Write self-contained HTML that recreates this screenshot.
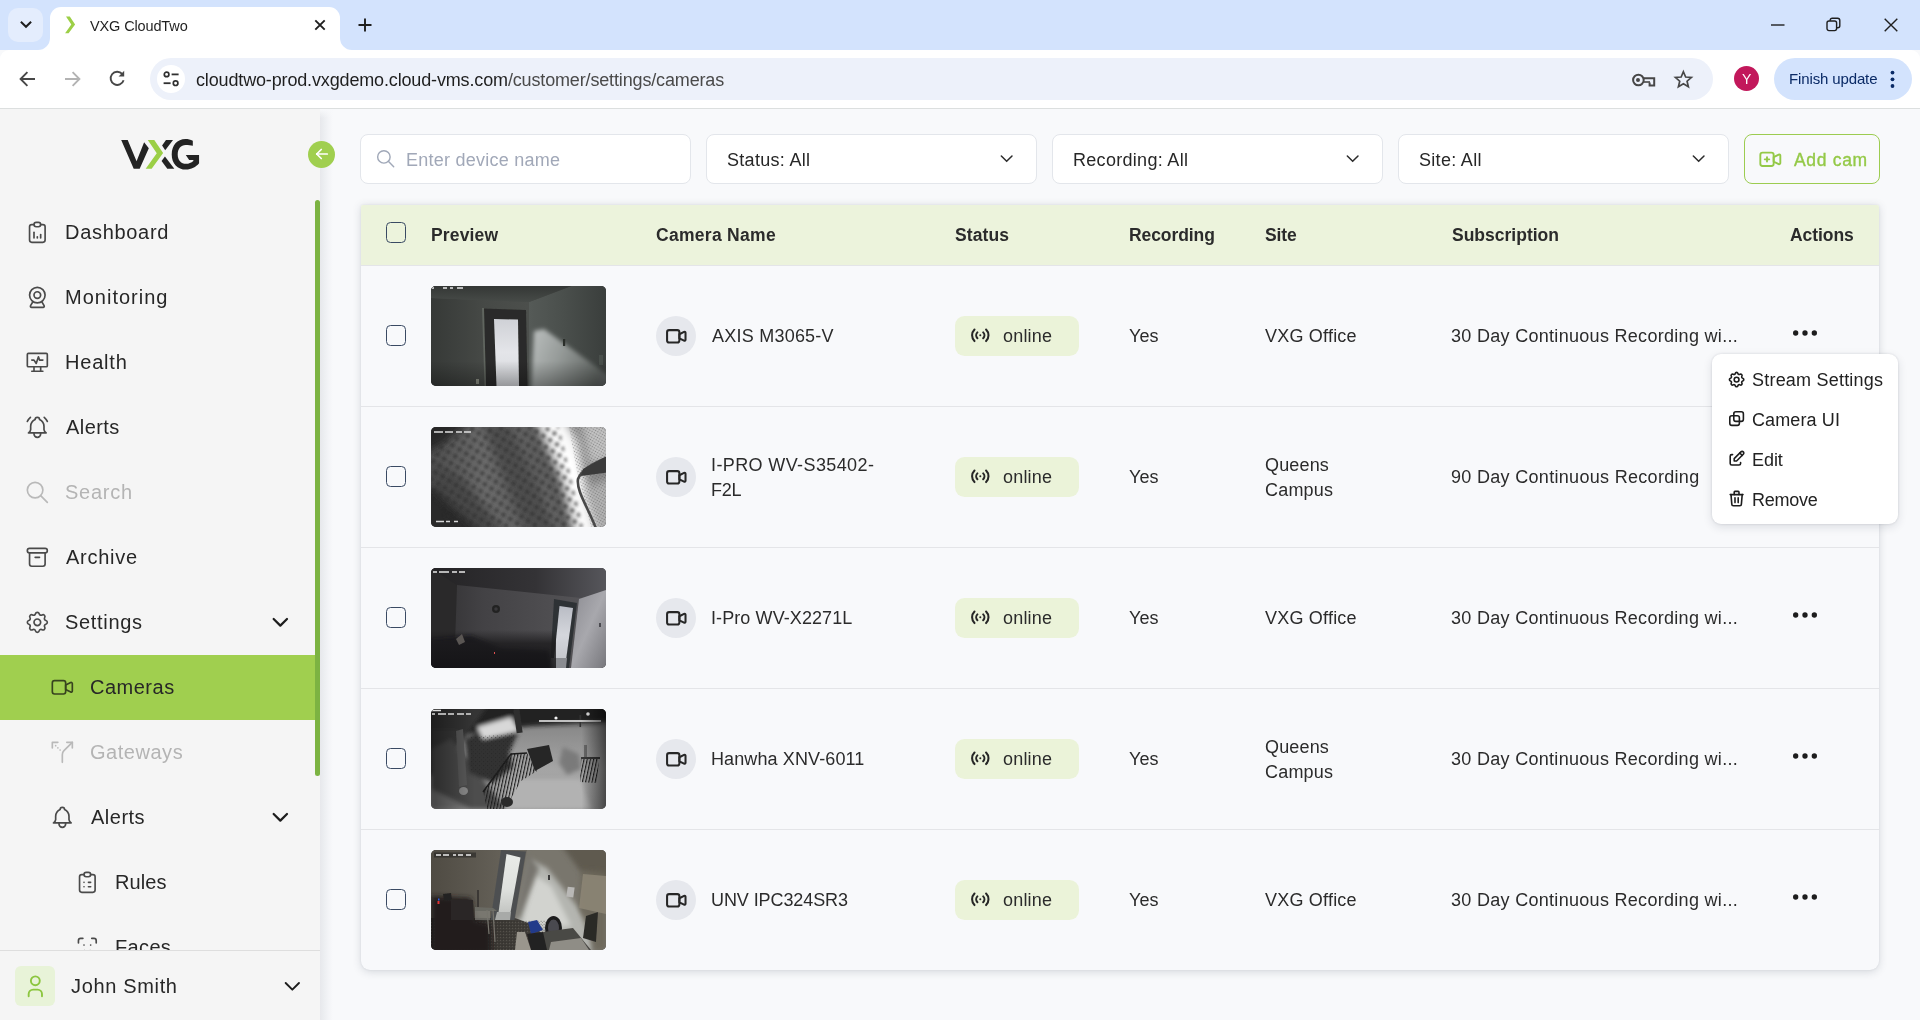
<!DOCTYPE html>
<html lang="en">
<head>
<meta charset="utf-8">
<title>VXG CloudTwo</title>
<style>
*{box-sizing:border-box;margin:0;padding:0}
html,body{width:1920px;height:1020px;overflow:hidden;background:#f8f9fb;font-family:"Liberation Sans",sans-serif;color:#272727}
body{position:relative}
.abs{position:absolute}
svg{display:block;overflow:visible}
.t{position:absolute;white-space:nowrap;line-height:1;will-change:transform}
/* ---------- browser chrome ---------- */
#tabstrip{position:absolute;left:0;top:0;width:1920px;height:50px;background:#d3e3fd}
#toolbar{position:absolute;left:0;top:50px;width:1920px;height:58px;background:#fff;border-radius:9px 9px 0 0}
#tbline{position:absolute;left:0;top:108px;width:1920px;height:1.2px;background:#dcdfdf}
#tabsearch{position:absolute;left:8px;top:8px;width:35px;height:34px;border-radius:10px;background:#e4edfd}
#tab{position:absolute;left:50px;top:7px;width:290px;height:43px;background:#fff;border-radius:11px 11px 0 0}
.flare{position:absolute;top:38px;width:12px;height:12px}
#urlpill{position:absolute;left:150px;top:58px;width:1563px;height:42px;border-radius:21px;background:#edf1fa}
#siteinfo{position:absolute;left:157px;top:65px;width:28px;height:28px;border-radius:14px;background:#fff}
#avatar{position:absolute;left:1734px;top:66px;width:25px;height:25px;border-radius:50%;background:#c2185b}
#finish{position:absolute;left:1774px;top:58px;width:138px;height:42px;border-radius:21px;background:#d3e3fd}
/* ---------- sidebar ---------- */
#sidebar{position:absolute;left:0;top:110px;width:320px;height:910px;background:#f5f5f5;box-shadow:0 -1px 0 #f5f5f5}
#sideshadow{position:absolute;left:320px;top:110px;width:13px;height:910px;background:linear-gradient(90deg,#e7e8ec 0,#eceef1 30%,#f3f4f7 65%,#f8f9fb 100%)}
#navclip{position:absolute;left:0;top:90px;width:320px;height:750px;overflow:hidden}
.nav{position:absolute;left:0;width:316px;height:65px}
.nav .t{font-size:20px;top:22px;letter-spacing:.45px;color:#272727}
.nav.dim .t{color:#b4b4b4}
.nav svg{position:absolute}
#active{position:absolute;left:0;top:545px;width:316px;height:65px;background:#a0cf4f}
#thumbbar{position:absolute;left:315px;top:200px;width:5px;height:576px;border-radius:3px;background:#7cb342}
#userbar{position:absolute;left:0;top:950px;width:320px;height:70px;background:#f5f5f5;border-top:1px solid #dedede}
#uavatar{position:absolute;left:15px;top:15px;width:40px;height:40px;border-radius:6px;background:#e8f3d8}
/* ---------- main ---------- */
.field{position:absolute;top:134px;height:49.5px;width:330.5px;background:#fff;border:1.2px solid #e3e6eb;border-radius:8px}
.field .t{font-size:18px;top:15.5px;left:20px;letter-spacing:.3px;color:#272727}
#addcam{position:absolute;left:1744px;top:134px;width:136px;height:50px;border:1.4px solid #9ccc50;border-radius:8px;background:#f8f9fb}
#card{position:absolute;left:361px;top:205px;width:1518px;height:764.7px;background:#f8f9fb;border-radius:2px 2px 9px 9px;box-shadow:0 1.5px 9px rgba(50,60,75,.17),0 0 2px rgba(50,60,75,.10)}
#thead{position:absolute;left:0;top:0;width:1518px;height:60.3px;background:#ecf3dc;border-radius:2px 2px 0 0}
#thead .t{font-size:17.5px;font-weight:bold;top:21.5px;color:#2b2b2b}
.row{position:absolute;left:0;width:1518px;height:141px;border-top:1.2px solid #e4e5e8}
.row .t{font-size:18px;color:#2b2b2b}
.cb{position:absolute;left:25px;width:20px;height:20.6px;border:1.4px solid #3a4a63;border-radius:4.5px}
.thumb{position:absolute;left:70px;top:20px;width:175px;height:100px;border-radius:5px;overflow:hidden;background:#333}
.camic{position:absolute;left:295px;top:50px;width:40px;height:40px;border-radius:50%;background:#e6e8ed}
.badge{position:absolute;left:594px;top:50.3px;width:124px;height:39.3px;border-radius:9.5px;background:#ebf3d9}
#menu{position:absolute;left:1712px;top:354px;width:186px;height:170.3px;background:#fff;border-radius:9px;box-shadow:0 3px 10px rgba(30,40,60,.13),0 0 3px rgba(30,40,60,.12)}
#menu .t{font-size:18px;color:#222}
</style>
</head>
<body>
<!-- ================= BROWSER CHROME ================= -->
<div id="tabstrip"></div>
<div id="toolbar"></div>
<div id="tbline"></div>
<div id="tabsearch"></div>
<div id="tab"></div>
<div id="urlpill"></div>
<div id="siteinfo"></div>
<div id="avatar"></div>
<div id="finish"></div>

<!-- tab flares -->
<svg class="abs" style="left:38px;top:38px" width="12" height="12" viewBox="0 0 12 12"><path d="M12 0 V12 H0 A12 12 0 0 0 12 0Z" fill="#fff"/></svg>
<svg class="abs" style="left:340px;top:38px" width="12" height="12" viewBox="0 0 12 12"><path d="M0 0 V12 H12 A12 12 0 0 1 0 0Z" fill="#fff"/></svg>
<!-- tab search chevron -->
<svg class="abs" style="left:19.6px;top:21.4px" width="12" height="8" viewBox="0 0 12 8"><path d="M1.6 1.4 L6 5.8 L10.4 1.4" fill="none" stroke="#1f1f1f" stroke-width="2" stroke-linecap="square" stroke-linejoin="miter"/></svg>
<!-- favicon -->
<svg class="abs" style="left:64px;top:16px" width="12" height="18" viewBox="0 0 12 18"><path d="M2 0.6 H5.8 L11.1 8.4 L4.6 17.2 H1.1 L7.3 8.4Z" fill="#9ccf46"/></svg>
<div class="t" style="left:90px;top:18.7px;font-size:14.5px;letter-spacing:-.13px;color:#1f1f1f">VXG CloudTwo</div>
<!-- tab close -->
<svg class="abs" style="left:314px;top:19.4px" width="12" height="12" viewBox="0 0 12 12"><path d="M1.3 1.3 L10.7 10.7 M10.7 1.3 L1.3 10.7" stroke="#1f1f1f" stroke-width="1.9" fill="none"/></svg>
<!-- new tab plus -->
<svg class="abs" style="left:358px;top:18px" width="14" height="14" viewBox="0 0 14 14"><path d="M7 0.5 V13.5 M0.5 7 H13.5" stroke="#1f1f1f" stroke-width="1.9" fill="none"/></svg>
<!-- window controls -->
<svg class="abs" style="left:1771px;top:24px" width="14" height="2" viewBox="0 0 14 2"><path d="M0 1 H13.5" stroke="#1f1f1f" stroke-width="1.4"/></svg>
<svg class="abs" style="left:1826px;top:17px" width="15" height="15" viewBox="0 0 15 15"><rect x="1" y="4" width="9.6" height="9.6" rx="2" fill="none" stroke="#1f1f1f" stroke-width="1.4"/><path d="M4.2 3.8 V3.2 A2 2 0 0 1 6.2 1.2 H11.6 A2.2 2.2 0 0 1 13.8 3.4 V8.8 A2 2 0 0 1 11.8 10.8 H11" fill="none" stroke="#1f1f1f" stroke-width="1.4"/></svg>
<svg class="abs" style="left:1884px;top:18px" width="14" height="14" viewBox="0 0 14 14"><path d="M0.7 0.7 L13.3 13.3 M13.3 0.7 L0.7 13.3" stroke="#1f1f1f" stroke-width="1.4" fill="none"/></svg>
<!-- back / forward / reload -->
<svg class="abs" style="left:19px;top:71px" width="17" height="16" viewBox="0 0 17 16"><path d="M16 8 H2.2 M8.4 1.2 L1.6 8 L8.4 14.8" fill="none" stroke="#474747" stroke-width="1.9"/></svg>
<svg class="abs" style="left:64px;top:71px" width="17" height="16" viewBox="0 0 17 16"><path d="M1 8 H14.8 M8.6 1.2 L15.4 8 L8.6 14.8" fill="none" stroke="#b3b3b3" stroke-width="1.9"/></svg>
<svg class="abs" style="left:109px;top:70px" width="17" height="17" viewBox="0 0 17 17"><path d="M14.6 10.2 A6.6 6.6 0 1 1 13.2 3.9" fill="none" stroke="#474747" stroke-width="1.9"/><path d="M15.2 0.8 V6.4 H9.6 Z" fill="#474747"/></svg>
<!-- site info (tune) icon -->
<svg class="abs" style="left:163px;top:71px" width="17" height="16" viewBox="0 0 17 16"><circle cx="3.6" cy="3.4" r="2.3" fill="none" stroke="#303030" stroke-width="1.7"/><path d="M8.6 3.4 H15.6" stroke="#303030" stroke-width="1.8"/><circle cx="12.6" cy="12.2" r="2.3" fill="none" stroke="#303030" stroke-width="1.7"/><path d="M0.6 12.2 H7.6" stroke="#303030" stroke-width="1.8"/></svg>
<div class="t" style="left:196px;top:71px;font-size:18px;letter-spacing:-.15px;color:#4a4a4a"><span style="color:#1f1f1f">cloudtwo-prod.vxgdemo.cloud-vms.com</span>/customer/settings/cameras</div>
<!-- key icon -->
<svg class="abs" style="left:1632px;top:72.7px" width="24" height="15" viewBox="0 0 24 15"><circle cx="6.4" cy="7" r="5.3" fill="none" stroke="#474747" stroke-width="2"/><circle cx="6" cy="7" r="2" fill="#474747"/><path d="M11.4 5.2 H22.2 V12.4 H17.6 V9.4" fill="none" stroke="#474747" stroke-width="2"/><path d="M11.4 9 H18" stroke="#474747" stroke-width="1.6"/></svg>
<!-- star icon -->
<svg class="abs" style="left:1674.4px;top:70px" width="18.8" height="17.9" viewBox="0 0 20 19"><path d="M10 1.8 L12.4 7.4 L18.5 7.9 L13.9 11.9 L15.3 17.8 L10 14.7 L4.7 17.8 L6.1 11.9 L1.5 7.9 L7.6 7.4 Z" fill="none" stroke="#474747" stroke-width="1.8" stroke-linejoin="miter"/></svg>
<div class="t" style="left:1741.8px;top:71.6px;font-size:14px;color:#fff">Y</div>
<div class="t" style="left:1789px;top:70.8px;font-size:15px;letter-spacing:-.13px;color:#0a2a66">Finish update</div>
<svg class="abs" style="left:1890px;top:69.6px" width="5" height="19" viewBox="0 0 5 19"><circle cx="2.5" cy="2.6" r="1.9" fill="#0a2a66"/><circle cx="2.5" cy="9.3" r="1.9" fill="#0a2a66"/><circle cx="2.5" cy="16" r="1.9" fill="#0a2a66"/></svg>


<!-- ================= SIDEBAR ================= -->
<div id="sidebar">
<svg class="abs" style="left:110px;top:20px" width="100" height="50" viewBox="0 0 1920 960">
<path d="M215 190 H340 L510 600 L655 235 L745 350 L570 745 H455 Z" fill="#232323"/>
<path d="M725 190 H850 L1020 442 L800 745 H685 L898 446 Z" fill="#9bcf46"/>
<path d="M1075 190 H1210 L1060 390 L1000 296 Z" fill="#232323"/>
<path d="M1055 510 L1235 745 H1100 L990 596 Z" fill="#232323"/>
<path d="M1590 205 C1545 185 1500 175 1450 175 C1290 175 1185 300 1185 468 C1185 640 1295 760 1460 760 C1560 760 1650 715 1710 640 V480 H1455 L1520 576 H1600 V596 C1560 632 1510 650 1462 650 C1365 650 1300 575 1300 468 C1300 362 1362 288 1452 288 C1505 288 1550 296 1590 300 Z" fill="#232323"/>
</svg>
<div id="navclip">
<div class="nav" style="top:-0.5px"><svg class="abs" style="left:24.4px;top:19.17px" width="26.67" height="26.67" viewBox="0 0 24 24" fill="none" stroke="#4a4a4a" stroke-width="1.5" stroke-linecap="round" stroke-linejoin="round"><path d="M9 5h-2a2 2 0 0 0 -2 2v12a2 2 0 0 0 2 2h10a2 2 0 0 0 2 -2v-12a2 2 0 0 0 -2 -2h-2"/><path d="M9 5a2 2 0 0 1 2 -2h2a2 2 0 0 1 2 2a2 2 0 0 1 -2 2h-2a2 2 0 0 1 -2 -2z"/><path d="M9 17v-5"/><path d="M12 17v-1"/><path d="M15 17v-3"/></svg><div class="t" style="left:64.8px;letter-spacing:0.69px">Dashboard</div></div>
<div class="nav" style="top:64.5px"><svg class="abs" style="left:24.4px;top:19.17px" width="26.67" height="26.67" viewBox="0 0 24 24" fill="none" stroke="#4a4a4a" stroke-width="1.5" stroke-linecap="round" stroke-linejoin="round"><circle cx="12" cy="10" r="7"/><circle cx="12" cy="10" r="3"/><path d="M8 16l-2.091 3.486a1 1 0 0 0 .857 1.514h10.468a1 1 0 0 0 .857 -1.514l-2.091 -3.486"/></svg><div class="t" style="left:64.8px;letter-spacing:1.01px">Monitoring</div></div>
<div class="nav" style="top:129.5px"><svg class="abs" style="left:24.4px;top:19.17px" width="26.67" height="26.67" viewBox="0 0 24 24" fill="none" stroke="#4a4a4a" stroke-width="1.5" stroke-linecap="round" stroke-linejoin="round"><path d="M3 5a1 1 0 0 1 1 -1h16a1 1 0 0 1 1 1v10a1 1 0 0 1 -1 1h-16a1 1 0 0 1 -1 -1z"/><path d="M7 20h10"/><path d="M9 16v4"/><path d="M15 16v4"/><path d="M7 10h2l2 3l2 -6l1 3h3"/></svg><div class="t" style="left:64.8px;letter-spacing:0.8px">Health</div></div>
<div class="nav" style="top:194.5px"><svg class="abs" style="left:24.4px;top:19.17px" width="26.67" height="26.67" viewBox="0 0 24 24" fill="none" stroke="#4a4a4a" stroke-width="1.5" stroke-linecap="round" stroke-linejoin="round"><path d="M10 5a2 2 0 0 1 4 0a7 7 0 0 1 4 6v3a4 4 0 0 0 2 3h-16a4 4 0 0 0 2 -3v-3a7 7 0 0 1 4 -6"/><path d="M9 17v1a3 3 0 0 0 6 0v-1"/><path d="M21 6.727a11.05 11.05 0 0 0 -2.794 -3.727"/><path d="M3 6.727a11.05 11.05 0 0 1 2.792 -3.727"/></svg><div class="t" style="left:66.3px;letter-spacing:0.44px">Alerts</div></div>
<div class="nav dim" style="top:259.5px"><svg class="abs" style="left:24.4px;top:19.17px" width="26.67" height="26.67" viewBox="0 0 24 24" fill="none" stroke="#b9b9b9" stroke-width="1.5" stroke-linecap="round" stroke-linejoin="round"><circle cx="10" cy="10" r="7"/><path d="M21 21l-6 -6"/></svg><div class="t" style="left:64.8px;letter-spacing:0.74px">Search</div></div>
<div class="nav" style="top:324.5px"><svg class="abs" style="left:24.4px;top:19.17px" width="26.67" height="26.67" viewBox="0 0 24 24" fill="none" stroke="#4a4a4a" stroke-width="1.5" stroke-linecap="round" stroke-linejoin="round"><path d="M3 6a2 2 0 0 1 2 -2h14a2 2 0 0 1 2 2a2 2 0 0 1 -2 2h-14a2 2 0 0 1 -2 -2z"/><path d="M5 8v10a2 2 0 0 0 2 2h10a2 2 0 0 0 2 -2v-10"/><path d="M10 12l4 0"/></svg><div class="t" style="left:65.8px;letter-spacing:0.73px">Archive</div></div>
<div class="nav" style="top:389.5px"><svg class="abs" style="left:24.4px;top:19.17px" width="26.67" height="26.67" viewBox="0 0 24 24" fill="none" stroke="#4a4a4a" stroke-width="1.5" stroke-linecap="round" stroke-linejoin="round"><path d="M10.325 4.317c.426 -1.756 2.924 -1.756 3.35 0a1.724 1.724 0 0 0 2.573 1.066c1.543 -.94 3.31 .826 2.37 2.37a1.724 1.724 0 0 0 1.065 2.572c1.756 .426 1.756 2.924 0 3.35a1.724 1.724 0 0 0 -1.066 2.573c.94 1.543 -.826 3.31 -2.37 2.37a1.724 1.724 0 0 0 -2.572 1.065c-.426 1.756 -2.924 1.756 -3.35 0a1.724 1.724 0 0 0 -2.573 -1.066c-1.543 .94 -3.31 -.826 -2.37 -2.37a1.724 1.724 0 0 0 -1.065 -2.572c-1.756 -.426 -1.756 -2.924 0 -3.35a1.724 1.724 0 0 0 1.066 -2.573c-.94 -1.543 .826 -3.31 2.37 -2.37c1 .608 2.296 .07 2.572 -1.065z"/><circle cx="12" cy="12" r="3"/></svg><div class="t" style="left:64.8px;letter-spacing:0.69px">Settings</div><svg class="abs" style="left:267px;top:19.17px" width="26.67" height="26.67" viewBox="0 0 24 24" fill="none" stroke="#1d1d1d" stroke-width="2" stroke-linecap="round" stroke-linejoin="round"><path d="M6 9l6 6l6 -6"/></svg></div>
<div id="active" style="top:454.5px"></div>
<div class="nav" style="top:454.5px"><svg class="abs" style="left:49.4px;top:19.17px" width="26.67" height="26.67" viewBox="0 0 24 24" fill="none" stroke="#37431f" stroke-width="1.5" stroke-linecap="round" stroke-linejoin="round"><path d="M15 10l4.553 -2.276a1 1 0 0 1 1.447 .894v6.764a1 1 0 0 1 -1.447 .894l-4.553 -2.276v-4z"/><path d="M3 8a2 2 0 0 1 2 -2h8a2 2 0 0 1 2 2v8a2 2 0 0 1 -2 2h-8a2 2 0 0 1 -2 -2z"/></svg><div class="t" style="left:89.6px;letter-spacing:0.5px">Cameras</div></div>
<div class="nav dim" style="top:519.5px"><svg class="abs" style="left:49.4px;top:19.17px" width="26.67" height="26.67" viewBox="0 0 24 24" fill="none" stroke="#b9b9b9" stroke-width="1.5" stroke-linecap="round" stroke-linejoin="round"><path d="M8 3h-5v5"/><path d="M16 3h5v5"/><path d="M21 3l-7.536 7.536a5 5 0 0 0 -1.464 3.534v6.93"/><path d="M6 6.01v-.01"/><path d="M8 8.01v-.01"/><path d="M10 10.01v-.01"/></svg><div class="t" style="left:89.7px;letter-spacing:0.53px">Gateways</div></div>
<div class="nav" style="top:584.5px"><svg class="abs" style="left:49.4px;top:19.17px" width="26.67" height="26.67" viewBox="0 0 24 24" fill="none" stroke="#4a4a4a" stroke-width="1.5" stroke-linecap="round" stroke-linejoin="round"><path d="M10 5a2 2 0 1 1 4 0a7 7 0 0 1 4 6v3a4 4 0 0 0 2 3h-16a4 4 0 0 0 2 -3v-3a7 7 0 0 1 4 -6"/><path d="M9 17v1a3 3 0 0 0 6 0v-1"/></svg><div class="t" style="left:91.0px;letter-spacing:0.5px">Alerts</div><svg class="abs" style="left:267px;top:19.17px" width="26.67" height="26.67" viewBox="0 0 24 24" fill="none" stroke="#1d1d1d" stroke-width="2" stroke-linecap="round" stroke-linejoin="round"><path d="M6 9l6 6l6 -6"/></svg></div>
<div class="nav" style="top:649.5px"><svg class="abs" style="left:74.4px;top:19.17px" width="26.67" height="26.67" viewBox="0 0 24 24" fill="none" stroke="#4a4a4a" stroke-width="1.5" stroke-linecap="round" stroke-linejoin="round"><path d="M9 5h-2a2 2 0 0 0 -2 2v12a2 2 0 0 0 2 2h10a2 2 0 0 0 2 -2v-12a2 2 0 0 0 -2 -2h-2"/><path d="M9 5a2 2 0 0 1 2 -2h2a2 2 0 0 1 2 2a2 2 0 0 1 -2 2h-2a2 2 0 0 1 -2 -2z"/><path d="M9 12l.01 0"/><path d="M13 12l2 0"/><path d="M9 16l.01 0"/><path d="M13 16l2 0"/></svg><div class="t" style="left:114.9px;letter-spacing:0.07px">Rules</div></div>
<div class="nav" style="top:714.5px"><svg class="abs" style="left:74.4px;top:19.17px" width="26.67" height="26.67" viewBox="0 0 24 24" fill="none" stroke="#4a4a4a" stroke-width="1.5" stroke-linecap="round" stroke-linejoin="round"><path d="M4 8v-2a2 2 0 0 1 2 -2h2"/><path d="M4 16v2a2 2 0 0 0 2 2h2"/><path d="M16 4h2a2 2 0 0 1 2 2v2"/><path d="M16 20h2a2 2 0 0 0 2 -2v-2"/><path d="M9 10l.01 0"/><path d="M15 10l.01 0"/><path d="M9.5 15a3.5 3.5 0 0 0 5 0"/></svg><div class="t" style="left:114.9px;letter-spacing:0.35px">Faces</div></div>
</div>
</div>
<div id="sideshadow"></div><div class="abs" style="left:320px;top:109px;width:14px;height:9px;background:linear-gradient(180deg,#f8f9fb 0,rgba(248,249,251,0) 100%)"></div>
<div id="thumbbar"></div>
<div class="abs" style="left:308px;top:141px;width:27px;height:27px;border-radius:50%;background:#a0cf4f"></div><svg class="abs" style="left:313px;top:145px" width="18" height="18" viewBox="0 0 24 24" fill="none" stroke="#fff" stroke-width="2.3" stroke-linecap="round" stroke-linejoin="round"><path d="M5 12l14 0"/><path d="M5 12l6 6"/><path d="M5 12l6 -6"/></svg>
<div id="userbar">
<div id="uavatar"></div>
<svg class="abs" style="left:21.7px;top:21.7px" width="26.67" height="26.67" viewBox="0 0 24 24" fill="none" stroke="#8cc63f" stroke-width="1.7" stroke-linecap="round" stroke-linejoin="round"><circle cx="12" cy="7" r="4"/><path d="M6 21v-2a4 4 0 0 1 4 -4h4a4 4 0 0 1 4 4v2"/></svg><div class="t" style="left:70.9px;top:25px;font-size:20px;letter-spacing:.66px;color:#272727">John Smith</div><svg class="abs" style="left:279px;top:22px" width="26.67" height="26.67" viewBox="0 0 24 24" fill="none" stroke="#1d1d1d" stroke-width="1.7" stroke-linecap="round" stroke-linejoin="round"><path d="M6 9l6 6l6 -6"/></svg>
</div>

<!-- ================= MAIN ================= -->
<div class="field" style="left:360.2px"><svg class="abs" style="left:14px;top:13px" width="21.33" height="21.33" viewBox="0 0 24 24" fill="none" stroke="#a0a8b8" stroke-width="1.6" stroke-linecap="round" stroke-linejoin="round"><circle cx="10" cy="10" r="7"/><path d="M21 21l-6 -6"/></svg><div class="t" style="left:45px;color:#a1a8b8;letter-spacing:.25px">Enter device name</div></div>
<div class="field" style="left:706.3px"><div class="t">Status: All</div><svg class="abs" style="left:289px;top:13px" width="21.33" height="21.33" viewBox="0 0 24 24" fill="none" stroke="#2b2b2b" stroke-width="1.7" stroke-linecap="round" stroke-linejoin="round"><path d="M6 9l6 6l6 -6"/></svg></div>
<div class="field" style="left:1052.3px"><div class="t">Recording: All</div><svg class="abs" style="left:289px;top:13px" width="21.33" height="21.33" viewBox="0 0 24 24" fill="none" stroke="#2b2b2b" stroke-width="1.7" stroke-linecap="round" stroke-linejoin="round"><path d="M6 9l6 6l6 -6"/></svg></div>
<div class="field" style="left:1398.3px"><div class="t">Site: All</div><svg class="abs" style="left:289px;top:13px" width="21.33" height="21.33" viewBox="0 0 24 24" fill="none" stroke="#2b2b2b" stroke-width="1.7" stroke-linecap="round" stroke-linejoin="round"><path d="M6 9l6 6l6 -6"/></svg></div>
<div id="addcam"><svg class="abs" style="left:12.2px;top:10.7px" width="26.67" height="26.67" viewBox="0 0 24 24" fill="none" stroke="#94c947" stroke-width="1.7" stroke-linecap="round" stroke-linejoin="round"><path d="M15 10l4.553 -2.276a1 1 0 0 1 1.447 .894v6.764a1 1 0 0 1 -1.447 .894l-4.553 -2.276v-4z"/><path d="M3 8a2 2 0 0 1 2 -2h8a2 2 0 0 1 2 2v8a2 2 0 0 1 -2 2h-8a2 2 0 0 1 -2 -2z"/><path d="M7 12l4 0"/><path d="M9 10l0 4"/></svg><div class="t" style="left:48.6px;top:17px;font-size:17.5px;letter-spacing:.69px;color:#94c947;-webkit-text-stroke:.35px #94c947">Add cam</div></div>
<div id="card">
<div id="thead">
<div class="cb" style="top:17px"></div>
<div class="t" style="left:70px;letter-spacing:0.15px">Preview</div>
<div class="t" style="left:295px;letter-spacing:0.29px">Camera Name</div>
<div class="t" style="left:594px;letter-spacing:0.1px">Status</div>
<div class="t" style="left:768px;letter-spacing:-0.08px">Recording</div>
<div class="t" style="left:904px;letter-spacing:-0.13px">Site</div>
<div class="t" style="left:1091px;letter-spacing:0px">Subscription</div>
<div class="t" style="left:1429px;letter-spacing:-0.06px">Actions</div>
</div>
<!-- ROWS-S -->
<div class="row" style="top:60px"><div class="cb" style="top:59.3px"></div><div class="thumb"><!-- T0S --><svg width="175" height="100" viewBox="0 0 175 100">
<defs>
<linearGradient id="a0w" x1="0" y1="0" x2="1" y2="0"><stop offset="0" stop-color="#363937"/><stop offset=".3" stop-color="#464946"/><stop offset=".55" stop-color="#4c4f4c"/><stop offset="1" stop-color="#535754"/></linearGradient>
<linearGradient id="a0r" x1="0" y1="0" x2="1" y2="0"><stop offset="0" stop-color="#555a57"/><stop offset=".45" stop-color="#4a4f4c"/><stop offset="1" stop-color="#3a3e3c"/></linearGradient>
<linearGradient id="a0c" x1="0" y1="0" x2="0" y2="1"><stop offset="0" stop-color="#343735"/><stop offset="1" stop-color="#474b48"/></linearGradient>
<linearGradient id="a0d" x1="0" y1="0" x2="0" y2="1"><stop offset="0" stop-color="#cfd1d6"/><stop offset=".5" stop-color="#e4e5e9"/><stop offset="1" stop-color="#d6d8dc"/></linearGradient>
<linearGradient id="a0l" x1="0" y1="0" x2="1" y2=".35"><stop offset="0" stop-color="#bcc0bf"/><stop offset=".45" stop-color="#969b99"/><stop offset="1" stop-color="#5c615e"/></linearGradient>
<linearGradient id="a0v" x1="0" y1="0" x2="0" y2="1"><stop offset="0" stop-color="#000" stop-opacity="0"/><stop offset=".75" stop-color="#000" stop-opacity="0"/><stop offset="1" stop-color="#000" stop-opacity=".3"/></linearGradient>
<filter id="a0b" x="-10%" y="-10%" width="120%" height="120%"><feGaussianBlur stdDeviation="2.2"/></filter>
<filter id="a0s" x="-5%" y="-5%" width="110%" height="110%"><feGaussianBlur stdDeviation=".5"/></filter>
</defs>
<rect width="175" height="100" fill="url(#a0w)"/>
<polygon points="98,16 175,-12 175,100 98,100" fill="url(#a0r)"/>
<polygon points="0,0 175,0 175,-12 136,2 98,16 0,12" fill="url(#a0c)"/>
<polygon points="0,0 140,0 98,16 0,12" fill="url(#a0c)"/>
<g filter="url(#a0b)"><polygon points="103,45 113,43 178,90 178,106 100,106" fill="url(#a0l)"/></g>
<g filter="url(#a0s)">
<polygon points="52,22.5 95,24 96.5,100 55,100" fill="#2a2b29"/>
<polygon points="63,33 87,33.5 88,100 65.5,100" fill="url(#a0d)"/>
<polygon points="51,22 53,22 55,100 53.5,100" fill="#60655f"/>
</g>
<rect x="132" y="53" width="2.2" height="7" fill="#2b2d2b" filter="url(#a0s)"/>
<rect x="168" y="69" width="4" height="10" fill="#4a4f4b" filter="url(#a0s)"/>
<rect x="45" y="93" width="3" height="5" fill="#8a8d82" filter="url(#a0s)"/>
<rect width="175" height="100" fill="url(#a0v)"/>
<path d="M1 2 h2 m9 0 h4 m3 0 h3 m4 0 h6" stroke="#e8e8e8" stroke-width="1.6"/>
</svg><!-- T0E --></div><div class="camic"><svg class="abs" style="left:7.8px;top:7.6px" width="24.6" height="24.6" viewBox="0 0 24 24" fill="none" stroke="#262626" stroke-width="2" stroke-linecap="round" stroke-linejoin="round"><path d="M15 10l4.553 -2.276a1 1 0 0 1 1.447 .894v6.764a1 1 0 0 1 -1.447 .894l-4.553 -2.276v-4z"/><path d="M3 8a2 2 0 0 1 2 -2h8a2 2 0 0 1 2 2v8a2 2 0 0 1 -2 2h-8a2 2 0 0 1 -2 -2z"/></svg></div><div class="t" style="left:350.8px;top:61px;letter-spacing:0.23px">AXIS M3065-V</div><div class="badge"><svg class="abs" style="left:12.8px;top:7.2px" width="24.6" height="24.6" viewBox="0 0 24 24" fill="none" stroke="#262626" stroke-width="2" stroke-linecap="round" stroke-linejoin="round"><path d="M12 12l0 .01"/><path d="M14.828 9.172a4 4 0 0 1 0 5.656"/><path d="M17.657 6.343a8 8 0 0 1 0 11.314"/><path d="M9.168 14.828a4 4 0 0 1 0 -5.656"/><path d="M6.337 17.657a8 8 0 0 1 0 -11.314"/></svg><div class="t" style="left:48px;top:10.7px;letter-spacing:.2px">online</div></div><div class="t" style="left:768.2px;top:61px;letter-spacing:0.05px">Yes</div><div class="t" style="left:904.4px;top:61px;letter-spacing:0.21px">VXG Office</div><div class="t" style="left:1090px;top:61px;letter-spacing:0.3px">30 Day Continuous Recording wi...</div><svg class="abs" style="left:1428px;top:50.5px" width="32" height="32" viewBox="0 0 24 24" fill="none" stroke="#1d1d1d" stroke-width="2" stroke-linecap="round" stroke-linejoin="round"><circle cx="5" cy="12" r="1"/><circle cx="12" cy="12" r="1"/><circle cx="19" cy="12" r="1"/></svg></div>
<div class="row" style="top:201px"><div class="cb" style="top:59.3px"></div><div class="thumb"><!-- T1S --><svg width="175" height="100" viewBox="0 0 175 100">
<defs>
<linearGradient id="b1g" x1="0" y1="0" x2="1" y2="0"><stop offset="0" stop-color="#505050"/><stop offset=".3" stop-color="#6c6c6c"/><stop offset=".62" stop-color="#606060"/><stop offset=".76" stop-color="#969696"/><stop offset="1" stop-color="#888"/></linearGradient>
<pattern id="b1p" width="8" height="8" patternUnits="userSpaceOnUse" patternTransform="rotate(32)"><circle cx="4" cy="4" r="2.3" fill="#2c2c2c"/></pattern>
<pattern id="b1q" width="2.6" height="2.6" patternUnits="userSpaceOnUse" patternTransform="rotate(30)"><circle cx="1.3" cy="1.3" r=".75" fill="#4a4a4a"/></pattern>
<filter id="b1b" x="-10%" y="-10%" width="120%" height="120%"><feGaussianBlur stdDeviation="1.6"/></filter>
<filter id="b1c" x="-20%" y="-20%" width="140%" height="140%"><feGaussianBlur stdDeviation="4.5"/></filter>
<filter id="b1s"><feGaussianBlur stdDeviation=".7"/></filter>
</defs>
<rect width="175" height="100" fill="url(#b1g)"/>
<g filter="url(#b1c)">
<polygon points="-10,-10 45,-10 10,18 -10,28" fill="#262626"/>
<polygon points="-10,58 12,62 62,110 -10,110" fill="#2b2b2b"/>
<polygon points="2,36 30,50 78,110 55,110 -5,52" fill="#4a4a4a"/>
<polygon points="50,-5 78,-5 128,110 96,110" fill="#505050"/>
<polygon points="92,-5 112,-5 150,110 128,110" fill="#5e5e5e"/>
<polygon points="104,-12 130,-12 146,14 166,112 146,112 132,52" fill="#fafafa"/>
<polygon points="126,22 146,30 152,70 136,60" fill="#ffffff"/>
<polygon points="150,-5 182,-5 182,32 158,38" fill="#c4c4c4"/>
<polygon points="152,62 182,50 182,112 166,112" fill="#b4b4b4"/>
</g>
<g filter="url(#b1b)" opacity=".7"><polygon points="30,0 128,0 152,100 20,100 0,65 0,25" fill="url(#b1p)"/></g>
<g opacity=".5"><polygon points="138,0 175,0 175,100 160,100 146,45" fill="url(#b1q)"/></g>
<g filter="url(#b1s)">
<path d="M178 30 C162 36 150 44 147 52 C145 64 158 82 166 104" fill="none" stroke="#4a4a4a" stroke-width="2.6"/>
<path d="M180 27 L152 42 L150 49 L180 45 Z" fill="#3a3a3a"/>
</g>
<path d="M3 5 h9 m2 0 h8 m3 0 h6 m2 0 h7" stroke="#e0e0e0" stroke-width="1.6"/>
<path d="M5 94.5 h8 m2 0 h4 m4 0 h4" stroke="#d8d8d8" stroke-width="1.4"/>
</svg><!-- T1E --></div><div class="camic"><svg class="abs" style="left:7.8px;top:7.6px" width="24.6" height="24.6" viewBox="0 0 24 24" fill="none" stroke="#262626" stroke-width="2" stroke-linecap="round" stroke-linejoin="round"><path d="M15 10l4.553 -2.276a1 1 0 0 1 1.447 .894v6.764a1 1 0 0 1 -1.447 .894l-4.553 -2.276v-4z"/><path d="M3 8a2 2 0 0 1 2 -2h8a2 2 0 0 1 2 2v8a2 2 0 0 1 -2 2h-8a2 2 0 0 1 -2 -2z"/></svg></div><div class="t" style="left:349.5px;top:49.2px;letter-spacing:0.39px">I-PRO WV-S35402-</div><div class="t" style="left:349.5px;top:73.8px;letter-spacing:-0.25px">F2L</div><div class="badge"><svg class="abs" style="left:12.8px;top:7.2px" width="24.6" height="24.6" viewBox="0 0 24 24" fill="none" stroke="#262626" stroke-width="2" stroke-linecap="round" stroke-linejoin="round"><path d="M12 12l0 .01"/><path d="M14.828 9.172a4 4 0 0 1 0 5.656"/><path d="M17.657 6.343a8 8 0 0 1 0 11.314"/><path d="M9.168 14.828a4 4 0 0 1 0 -5.656"/><path d="M6.337 17.657a8 8 0 0 1 0 -11.314"/></svg><div class="t" style="left:48px;top:10.7px;letter-spacing:.2px">online</div></div><div class="t" style="left:768.2px;top:61px;letter-spacing:0.05px">Yes</div><div class="t" style="left:903.5px;top:49.2px;letter-spacing:0.15px">Queens</div><div class="t" style="left:903.5px;top:73.8px;letter-spacing:0.2px">Campus</div><div class="t" style="left:1090px;top:61px;letter-spacing:0.31px">90 Day Continuous Recording</div><svg class="abs" style="left:1428px;top:50.5px" width="32" height="32" viewBox="0 0 24 24" fill="none" stroke="#1d1d1d" stroke-width="2" stroke-linecap="round" stroke-linejoin="round"><circle cx="5" cy="12" r="1"/><circle cx="12" cy="12" r="1"/><circle cx="19" cy="12" r="1"/></svg></div>
<div class="row" style="top:342px"><div class="cb" style="top:59.3px"></div><div class="thumb"><!-- T2S --><svg width="175" height="100" viewBox="0 0 175 100">
<defs>
<linearGradient id="c2w" x1="0" y1="0" x2="1" y2="0"><stop offset="0" stop-color="#302f31"/><stop offset=".3" stop-color="#434245"/><stop offset=".7" stop-color="#4f4e51"/><stop offset="1" stop-color="#5a595d"/></linearGradient>
<linearGradient id="c2c" x1="0" y1="0" x2="1" y2="0"><stop offset="0" stop-color="#242325"/><stop offset=".6" stop-color="#343336"/><stop offset="1" stop-color="#56565b"/></linearGradient>
<linearGradient id="c2r" x1="0" y1="0" x2="1" y2="1"><stop offset="0" stop-color="#8a8a90"/><stop offset=".5" stop-color="#a8a8ad"/><stop offset="1" stop-color="#77777c"/></linearGradient>
<linearGradient id="c2d" x1="0" y1="0" x2="0" y2="1"><stop offset="0" stop-color="#b9bcc4"/><stop offset=".5" stop-color="#d4d6dc"/><stop offset="1" stop-color="#c2c4ca"/></linearGradient>
<linearGradient id="c2f" x1="0" y1="0" x2="0" y2="1"><stop offset="0" stop-color="#1c1b1d" stop-opacity="0"/><stop offset=".35" stop-color="#1c1b1d"/><stop offset="1" stop-color="#151416"/></linearGradient>
<filter id="c2s"><feGaussianBlur stdDeviation=".55"/></filter>
<filter id="c2b" x="-10%" y="-10%" width="120%" height="120%"><feGaussianBlur stdDeviation="2"/></filter>
</defs>
<rect width="175" height="100" fill="url(#c2w)"/>
<polygon points="0,0 175,0 175,24 150,30 26,17 0,22" fill="url(#c2c)"/>
<polygon points="0,0 26,17 24,75 0,80" fill="#2a292a"/>
<g filter="url(#c2s)">
<polygon points="148,31 175,22 175,100 140,100" fill="url(#c2r)"/>
<polygon points="123,31 146,35 138,100 119,100" fill="#2f3236"/>
<polygon points="128.5,38 142,40 134.5,96 122.5,96" fill="url(#c2d)"/>
<polygon points="120,90 136,90 135,100 118,100" fill="#8a8c91"/>
</g>
<g filter="url(#c2b)"><polygon points="0,72 40,68 70,80 118,82 122,104 0,104" fill="#18171a"/></g>
<rect x="0" y="62" width="125" height="38" fill="url(#c2f)" opacity=".8"/>
<circle cx="65" cy="41" r="4" fill="#232224" filter="url(#c2s)"/>
<circle cx="65" cy="41" r="1.8" fill="#3a393c"/>
<polygon points="25,71 31,66 34,74 28,77" fill="#5a5653" filter="url(#c2s)"/>
<rect x="168" y="55" width="2" height="4" fill="#4a4a50"/>
<rect x="63" y="84" width="1" height="2" fill="#e05050"/>
<path d="M2 4 h4 m2 0 h10 m3 0 h5 m2 0 h6" stroke="#e8e8e8" stroke-width="1.6"/>
</svg><!-- T2E --></div><div class="camic"><svg class="abs" style="left:7.8px;top:7.6px" width="24.6" height="24.6" viewBox="0 0 24 24" fill="none" stroke="#262626" stroke-width="2" stroke-linecap="round" stroke-linejoin="round"><path d="M15 10l4.553 -2.276a1 1 0 0 1 1.447 .894v6.764a1 1 0 0 1 -1.447 .894l-4.553 -2.276v-4z"/><path d="M3 8a2 2 0 0 1 2 -2h8a2 2 0 0 1 2 2v8a2 2 0 0 1 -2 2h-8a2 2 0 0 1 -2 -2z"/></svg></div><div class="t" style="left:349.7px;top:61px;letter-spacing:0.09px">I-Pro WV-X2271L</div><div class="badge"><svg class="abs" style="left:12.8px;top:7.2px" width="24.6" height="24.6" viewBox="0 0 24 24" fill="none" stroke="#262626" stroke-width="2" stroke-linecap="round" stroke-linejoin="round"><path d="M12 12l0 .01"/><path d="M14.828 9.172a4 4 0 0 1 0 5.656"/><path d="M17.657 6.343a8 8 0 0 1 0 11.314"/><path d="M9.168 14.828a4 4 0 0 1 0 -5.656"/><path d="M6.337 17.657a8 8 0 0 1 0 -11.314"/></svg><div class="t" style="left:48px;top:10.7px;letter-spacing:.2px">online</div></div><div class="t" style="left:768.2px;top:61px;letter-spacing:0.05px">Yes</div><div class="t" style="left:904.4px;top:61px;letter-spacing:0.21px">VXG Office</div><div class="t" style="left:1090px;top:61px;letter-spacing:0.3px">30 Day Continuous Recording wi...</div><svg class="abs" style="left:1428px;top:50.5px" width="32" height="32" viewBox="0 0 24 24" fill="none" stroke="#1d1d1d" stroke-width="2" stroke-linecap="round" stroke-linejoin="round"><circle cx="5" cy="12" r="1"/><circle cx="12" cy="12" r="1"/><circle cx="19" cy="12" r="1"/></svg></div>
<div class="row" style="top:483px"><div class="cb" style="top:59.3px"></div><div class="thumb"><!-- T3S --><svg width="175" height="100" viewBox="0 0 175 100">
<defs>
<linearGradient id="d3g" x1="0" y1="0" x2="0" y2="1"><stop offset="0" stop-color="#3a3a3a"/><stop offset=".2" stop-color="#8a8a8a"/><stop offset=".6" stop-color="#a5a5a5"/><stop offset="1" stop-color="#9c9c9c"/></linearGradient>
<linearGradient id="d3v" x1="0" y1="0" x2="1" y2="0"><stop offset="0" stop-color="#000" stop-opacity=".45"/><stop offset=".25" stop-color="#000" stop-opacity="0"/><stop offset=".86" stop-color="#000" stop-opacity="0"/><stop offset="1" stop-color="#000" stop-opacity=".55"/></linearGradient>
<pattern id="d3r" width="3.2" height="40" patternUnits="userSpaceOnUse" patternTransform="skewX(-12)"><rect width="1.1" height="40" fill="#1f1f1f"/></pattern>
<pattern id="d3n" width="4" height="4" patternUnits="userSpaceOnUse"><rect x="0" y="0" width="1.2" height="1.2" fill="#222"/><rect x="2" y="2.4" width="1" height="1" fill="#262626"/></pattern>
<filter id="d3s"><feGaussianBlur stdDeviation=".6"/></filter>
<filter id="d3b" x="-15%" y="-15%" width="130%" height="130%"><feGaussianBlur stdDeviation="2.2"/></filter>
</defs>
<rect width="175" height="100" fill="url(#d3g)"/>
<g filter="url(#d3b)">
<polygon points="-5,-5 180,-5 180,12 100,17 60,21 0,32" fill="#242424"/>
<polygon points="-5,-5 58,-5 30,34 -5,70" fill="#343434"/><polygon points="0,20 26,20 30,78 0,70" fill="#3a3a3a"/>
<polygon points="0,40 20,30 75,100 0,100" fill="#4e4e4e"/>
<polygon points="0,80 40,100 0,100" fill="#7a7a7a"/>
<polygon points="34,30 58,18 88,22 78,44 82,58 62,74 38,64" fill="#303030"/>
<polygon points="46,18 80,8 88,22 52,30" fill="#d8d8d8"/>
<polygon points="132,38 148,45 150,60 136,66 128,54" fill="#7a7a7a"/>
<polygon points="110,70 132,74 126,92 104,88" fill="#858585"/>
<polygon points="80,70 150,70 160,100 75,100" fill="#b2b2b2"/>
</g>
<g filter="url(#d3s)">
<polygon points="25,22 32,20 36,76 28,78" fill="#5a5a5a"/>
<ellipse cx="32.5" cy="82" rx="4.5" ry="4" fill="#8d8d8d"/>
<polygon points="52,82 80,45 96,44 106,62 90,72 74,100 56,100" fill="url(#d3r)"/>
<path d="M52,83 L80,45 L96,44" fill="none" stroke="#1c1c1c" stroke-width="1.5"/>
<polygon points="96,40 118,36 122,52 104,62" fill="#262626"/>
<polygon points="150,50 168,50 166,74 149,73" fill="url(#d3r)"/>
<path d="M150 49 H169" stroke="#1f1f1f" stroke-width="1.6"/>
<rect x="84" y="0" width="6" height="24" fill="#2e2e2e" transform="rotate(-8 87 12)"/>
<rect x="148.5" y="6" width="1.6" height="12" fill="#303030"/>
<rect x="153" y="36" width="3" height="12" fill="#6a6a6a"/>
<ellipse cx="76" cy="93" rx="6" ry="5" fill="#2c2c2c"/>
<rect x="108" y="11" width="62" height="2" fill="#c0c0c0"/>
<circle cx="125" cy="9" r="1.6" fill="#f4f4f4"/><circle cx="157" cy="5" r="1.8" fill="#eee"/>
</g>
<g opacity=".5"><polygon points="40,28 84,24 78,58 60,70 40,62" fill="url(#d3n)"/></g>
<rect width="175" height="100" fill="url(#d3v)"/>
<path d="M1 1.5 h9 M1 5 h3 m3 0 h8 m2 0 h6 m3 0 h7 m2 0 h5" stroke="#dcdcdc" stroke-width="1.3"/>
</svg><!-- T3E --></div><div class="camic"><svg class="abs" style="left:7.8px;top:7.6px" width="24.6" height="24.6" viewBox="0 0 24 24" fill="none" stroke="#262626" stroke-width="2" stroke-linecap="round" stroke-linejoin="round"><path d="M15 10l4.553 -2.276a1 1 0 0 1 1.447 .894v6.764a1 1 0 0 1 -1.447 .894l-4.553 -2.276v-4z"/><path d="M3 8a2 2 0 0 1 2 -2h8a2 2 0 0 1 2 2v8a2 2 0 0 1 -2 2h-8a2 2 0 0 1 -2 -2z"/></svg></div><div class="t" style="left:349.7px;top:61px;letter-spacing:0.11px">Hanwha XNV-6011</div><div class="badge"><svg class="abs" style="left:12.8px;top:7.2px" width="24.6" height="24.6" viewBox="0 0 24 24" fill="none" stroke="#262626" stroke-width="2" stroke-linecap="round" stroke-linejoin="round"><path d="M12 12l0 .01"/><path d="M14.828 9.172a4 4 0 0 1 0 5.656"/><path d="M17.657 6.343a8 8 0 0 1 0 11.314"/><path d="M9.168 14.828a4 4 0 0 1 0 -5.656"/><path d="M6.337 17.657a8 8 0 0 1 0 -11.314"/></svg><div class="t" style="left:48px;top:10.7px;letter-spacing:.2px">online</div></div><div class="t" style="left:768.2px;top:61px;letter-spacing:0.05px">Yes</div><div class="t" style="left:903.5px;top:49.2px;letter-spacing:0.15px">Queens</div><div class="t" style="left:903.5px;top:73.8px;letter-spacing:0.2px">Campus</div><div class="t" style="left:1090px;top:61px;letter-spacing:0.3px">30 Day Continuous Recording wi...</div><svg class="abs" style="left:1428px;top:50.5px" width="32" height="32" viewBox="0 0 24 24" fill="none" stroke="#1d1d1d" stroke-width="2" stroke-linecap="round" stroke-linejoin="round"><circle cx="5" cy="12" r="1"/><circle cx="12" cy="12" r="1"/><circle cx="19" cy="12" r="1"/></svg></div>
<div class="row" style="top:624px"><div class="cb" style="top:59.3px"></div><div class="thumb"><!-- T4S --><svg width="175" height="100" viewBox="0 0 175 100">
<defs>
<linearGradient id="e4l" x1="0" y1="0" x2="1" y2="0"><stop offset="0" stop-color="#4f4b43"/><stop offset=".6" stop-color="#6f6b62"/><stop offset="1" stop-color="#77736a"/></linearGradient>
<radialGradient id="e4r" cx=".22" cy=".45" r=".8"><stop offset="0" stop-color="#c7c8c3"/><stop offset=".35" stop-color="#a9a9a3"/><stop offset=".75" stop-color="#7f7c73"/><stop offset="1" stop-color="#5c584f"/></radialGradient>
<linearGradient id="e4d" x1="0" y1="0" x2="0" y2="1"><stop offset="0" stop-color="#e9ebe8"/><stop offset=".6" stop-color="#dfe1de"/><stop offset="1" stop-color="#c3c5c2"/></linearGradient>
<linearGradient id="e4f" x1="0" y1="0" x2="1" y2="0"><stop offset="0" stop-color="#1f1c19"/><stop offset=".5" stop-color="#3a3733"/><stop offset="1" stop-color="#45423d"/></linearGradient>
<pattern id="e4n" width="3" height="3" patternUnits="userSpaceOnUse"><rect x="0" y="0" width="1" height="1" fill="#6a675f"/><rect x="1.6" y="1.8" width="1" height="1" fill="#1c1a18"/></pattern>
<filter id="e4s"><feGaussianBlur stdDeviation=".6"/></filter>
<filter id="e4b" x="-15%" y="-15%" width="130%" height="130%"><feGaussianBlur stdDeviation="2.4"/></filter>
</defs>
<rect width="175" height="100" fill="url(#e4l)"/>
<polygon points="96,0 175,0 175,100 84,100 84,70" fill="#79766d"/><g filter="url(#e4b)"><polygon points="100,10 116,18 160,74 160,104 84,104 86,66" fill="#b4b5b0"/><polygon points="102,24 120,36 140,76 90,78" fill="#d2d3cf"/><polygon points="130,-5 180,-5 180,30 150,22" fill="#5e5a50"/></g>
<g filter="url(#e4b)"><polygon points="97,4 108,18 88,70 84,66" fill="#77756e"/><polygon points="150,20 175,22 175,100 165,100 148,60" fill="#6a6558" opacity=".8"/></g>
<polygon points="0,68 84,68 110,100 0,100" fill="url(#e4f)"/>
<polygon points="84,68 100,74 130,100 100,100" fill="#403d39"/>
<rect x="0" y="70" width="120" height="30" fill="url(#e4n)" opacity=".5"/>
<g filter="url(#e4b)"><polygon points="0,46 40,48 44,70 60,74 60,104 0,104" fill="#221f1c"/></g>
<g filter="url(#e4s)">
<polygon points="70,0 95,1.5 83.5,70 59.5,70" fill="#4e5051"/>
<polygon points="75.5,4 89.5,7.5 79.5,62.5 67.5,62.5" fill="url(#e4d)"/>
<polygon points="66,62 80,62 79,70 64,70" fill="#a8aaa8"/>
<polygon points="12,44 20,43 21,50 13,51" fill="#242220"/>
<polygon points="20,49 42,50 43,70 20,70" fill="#2b2825"/>
<polygon points="44,57 62,58 66,61 44,61" fill="#6b6a63"/>
<rect x="44" y="61" width="15" height="9" fill="#8a8a84" opacity=".6"/>
<rect x="46" y="40" width="2" height="17" fill="#3a3835"/>
<path d="M56 60 L58 84 M62 60 L64 92" stroke="#77756e" stroke-width="1.2"/>
<ellipse cx="122.5" cy="78" rx="8.5" ry="12" fill="#1d1c1e"/>
<ellipse cx="122.5" cy="78" rx="5.5" ry="8.5" fill="#4a4950"/>
<polygon points="97,72 106,70 112,80 100,84" fill="#243b8a"/>
<polygon points="96,84 112,82 126,92 122,100 100,100" fill="#232120"/>
<polygon points="112,82 142,78 160,100 116,100" fill="#4a4844"/>
<polygon points="155,66 167,62 165,92 152,88" fill="#2c2a28"/>
<polygon points="86,82 94,82 100,100 84,100" fill="#9a968d"/>
<polygon points="120,92 150,88 158,100 118,100" fill="#8f8d86"/>
<rect x="136" y="37" width="7" height="10" fill="#b9b8b6" transform="rotate(8 139 42)"/>
<polygon points="152,24 175,26 175,64 148,58" fill="#8f8878" opacity=".8"/>
<rect x="117" y="25" width="2" height="5" fill="#3a3a3a"/>
<rect x="6.5" y="51" width="2" height="3" fill="#e03030"/><rect x="7" y="48.5" width="1.5" height="2" fill="#3060e0"/>
</g>
<rect x="3" y="2.5" width="42" height="5" fill="#1a1a1a" opacity=".5"/>
<path d="M5 5 h5 m2 0 h6 m4 0 h3 m2 0 h5 m3 0 h5" stroke="#ececec" stroke-width="1.5"/>
</svg><!-- T4E --></div><div class="camic"><svg class="abs" style="left:7.8px;top:7.6px" width="24.6" height="24.6" viewBox="0 0 24 24" fill="none" stroke="#262626" stroke-width="2" stroke-linecap="round" stroke-linejoin="round"><path d="M15 10l4.553 -2.276a1 1 0 0 1 1.447 .894v6.764a1 1 0 0 1 -1.447 .894l-4.553 -2.276v-4z"/><path d="M3 8a2 2 0 0 1 2 -2h8a2 2 0 0 1 2 2v8a2 2 0 0 1 -2 2h-8a2 2 0 0 1 -2 -2z"/></svg></div><div class="t" style="left:350.0px;top:61px;letter-spacing:-0.09px">UNV IPC324SR3</div><div class="badge"><svg class="abs" style="left:12.8px;top:7.2px" width="24.6" height="24.6" viewBox="0 0 24 24" fill="none" stroke="#262626" stroke-width="2" stroke-linecap="round" stroke-linejoin="round"><path d="M12 12l0 .01"/><path d="M14.828 9.172a4 4 0 0 1 0 5.656"/><path d="M17.657 6.343a8 8 0 0 1 0 11.314"/><path d="M9.168 14.828a4 4 0 0 1 0 -5.656"/><path d="M6.337 17.657a8 8 0 0 1 0 -11.314"/></svg><div class="t" style="left:48px;top:10.7px;letter-spacing:.2px">online</div></div><div class="t" style="left:768.2px;top:61px;letter-spacing:0.05px">Yes</div><div class="t" style="left:904.4px;top:61px;letter-spacing:0.21px">VXG Office</div><div class="t" style="left:1090px;top:61px;letter-spacing:0.3px">30 Day Continuous Recording wi...</div><svg class="abs" style="left:1428px;top:50.5px" width="32" height="32" viewBox="0 0 24 24" fill="none" stroke="#1d1d1d" stroke-width="2" stroke-linecap="round" stroke-linejoin="round"><circle cx="5" cy="12" r="1"/><circle cx="12" cy="12" r="1"/><circle cx="19" cy="12" r="1"/></svg></div>
<!-- ROWS-E -->
</div>
<div id="menu">
<svg class="abs" style="left:15.4px;top:15.6px" width="19.2" height="19.2" viewBox="0 0 24 24" fill="none" stroke="#1d1d1d" stroke-width="2" stroke-linecap="round" stroke-linejoin="round"><path d="M10.325 4.317c.426 -1.756 2.924 -1.756 3.35 0a1.724 1.724 0 0 0 2.573 1.066c1.543 -.94 3.31 .826 2.37 2.37a1.724 1.724 0 0 0 1.065 2.572c1.756 .426 1.756 2.924 0 3.35a1.724 1.724 0 0 0 -1.066 2.573c.94 1.543 -.826 3.31 -2.37 2.37a1.724 1.724 0 0 0 -2.572 1.065c-.426 1.756 -2.924 1.756 -3.35 0a1.724 1.724 0 0 0 -2.573 -1.066c-1.543 .94 -3.31 -.826 -2.37 -2.37a1.724 1.724 0 0 0 -1.065 -2.572c-1.756 -.426 -1.756 -2.924 0 -3.35a1.724 1.724 0 0 0 1.066 -2.573c-.94 -1.543 .826 -3.31 2.37 -2.37c1 .608 2.296 .07 2.572 -1.065z"/><circle cx="12" cy="12" r="3"/></svg>
<div class="t" style="left:39.5px;top:17px;letter-spacing:0.21px">Stream Settings</div>
<svg class="abs" style="left:15.4px;top:55.4px" width="19.2" height="19.2" viewBox="0 0 24 24" fill="none" stroke="#1d1d1d" stroke-width="2" stroke-linecap="round" stroke-linejoin="round"><rect x="8.5" y="3.5" width="12" height="12" rx="2.6"/><rect x="3.5" y="8.5" width="12" height="12" rx="2.6"/></svg>
<div class="t" style="left:39.5px;top:56.9px;letter-spacing:0.11px">Camera UI</div>
<svg class="abs" style="left:15.4px;top:95.4px" width="19.2" height="19.2" viewBox="0 0 24 24" fill="none" stroke="#1d1d1d" stroke-width="2" stroke-linecap="round" stroke-linejoin="round"><path d="M7 7h-1a2 2 0 0 0 -2 2v9a2 2 0 0 0 2 2h9a2 2 0 0 0 2 -2v-1"/><path d="M20.385 6.585a2.1 2.1 0 0 0 -2.97 -2.97l-8.415 8.385v3h3l8.385 -8.415z"/><path d="M16 5l3 3"/></svg>
<div class="t" style="left:39.9px;top:96.5px;letter-spacing:-0.07px">Edit</div>
<svg class="abs" style="left:15.4px;top:135.2px" width="19.2" height="19.2" viewBox="0 0 24 24" fill="none" stroke="#1d1d1d" stroke-width="2" stroke-linecap="round" stroke-linejoin="round"><path d="M4 7l16 0"/><path d="M10 11l0 6"/><path d="M14 11l0 6"/><path d="M5 7l1 12a2 2 0 0 0 2 2h8a2 2 0 0 0 2 -2l1 -12"/><path d="M9 7v-3a1 1 0 0 1 1 -1h4a1 1 0 0 1 1 1v3"/></svg>
<div class="t" style="left:39.9px;top:136.7px;letter-spacing:-0.26px">Remove</div>
</div>
</body>
</html>
